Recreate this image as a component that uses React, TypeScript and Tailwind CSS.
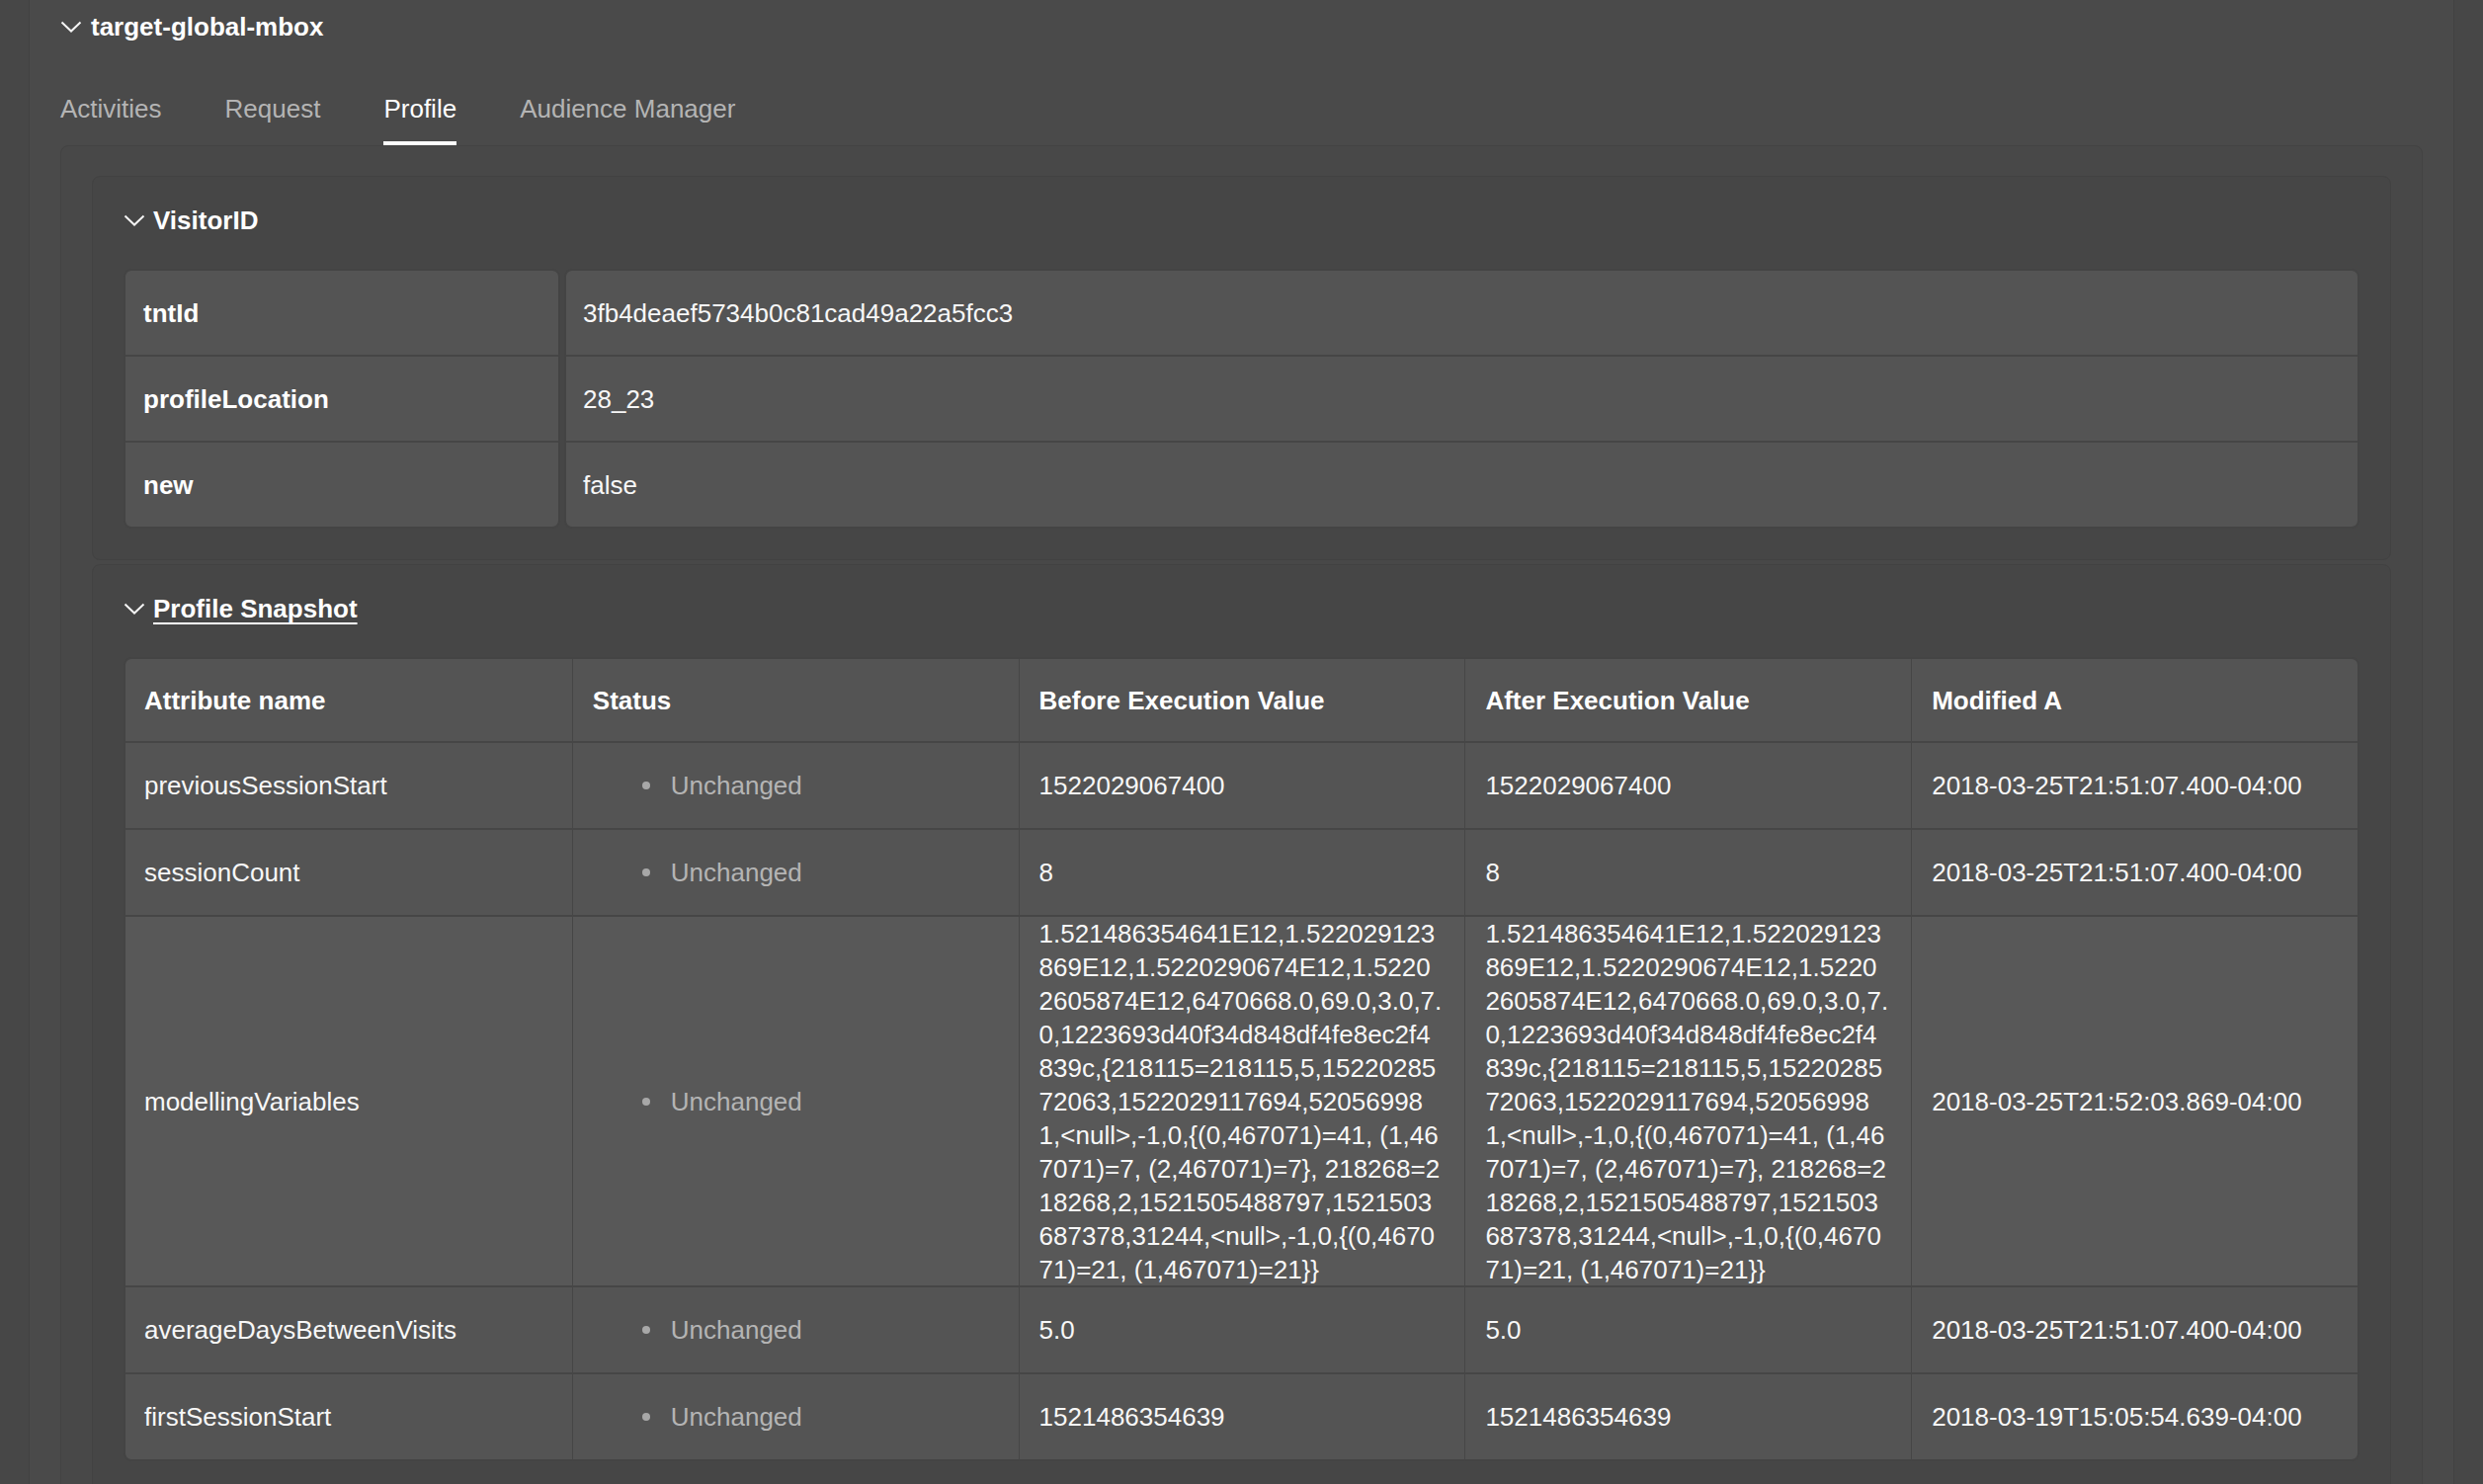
import type { ReactNode } from "react"

const FONT = "font-['Liberation_Sans',Arial,Helvetica,sans-serif]"

const modelling = [
  "1.521486354641E12,1.522029123",
  "869E12,1.5220290674E12,1.5220",
  "2605874E12,6470668.0,69.0,3.0,7.",
  "0,1223693d40f34d848df4fe8ec2f4",
  "839c,{218115=218115,5,15220285",
  "72063,1522029117694,52056998",
  "1,<null>,-1,0,{(0,467071)=41, (1,46",
  "7071)=7, (2,467071)=7}, 218268=2",
  "18268,2,1521505488797,1521503",
  "687378,31244,<null>,-1,0,{(0,4670",
  "71)=21, (1,467071)=21}}",
]

type SnapshotRow = {
  name: string
  before: string | string[]
  after: string | string[]
  modified: string
}

const snapshot: SnapshotRow[] = [
  {
    name: "previousSessionStart",
    before: "1522029067400",
    after: "1522029067400",
    modified: "2018-03-25T21:51:07.400-04:00",
  },
  {
    name: "sessionCount",
    before: "8",
    after: "8",
    modified: "2018-03-25T21:51:07.400-04:00",
  },
  {
    name: "modellingVariables",
    before: modelling,
    after: modelling,
    modified: "2018-03-25T21:52:03.869-04:00",
  },
  {
    name: "averageDaysBetweenVisits",
    before: "5.0",
    after: "5.0",
    modified: "2018-03-25T21:51:07.400-04:00",
  },
  {
    name: "firstSessionStart",
    before: "1521486354639",
    after: "1521486354639",
    modified: "2018-03-19T15:05:54.639-04:00",
  },
]

const visitor = [
  { key: "tntId", value: "3fb4deaef5734b0c81cad49a22a5fcc3" },
  { key: "profileLocation", value: "28_23" },
  { key: "new", value: "false" },
]

function Chevron() {
  return (
    <svg width="22" height="12" viewBox="0 0 22 12" fill="none" className="shrink-0">
      <polyline points="1.5,1.5 11,10.5 20.5,1.5" stroke="#f4f4f4" strokeWidth="2" />
    </svg>
  )
}

function Section({ title, underline, children }: { title: string; underline?: boolean; children: ReactNode }) {
  return (
    <section className="rounded-lg border border-[#424242] bg-[#464646] px-[31px] pt-[28px] pb-[31px]">
      <div className="flex h-8 items-center gap-[8px]">
        <Chevron />
        <span className={"text-[26px] font-bold text-white" + (underline ? " underline decoration-2 underline-offset-[5px]" : "")}>
          {title}
        </span>
      </div>
      <div className="mt-[33px]">{children}</div>
    </section>
  )
}

function Value({ v }: { v: string | string[] }) {
  if (Array.isArray(v)) {
    return (
      <div className="whitespace-nowrap">
        {v.map((line, i) => (
          <div key={i}>{line}</div>
        ))}
      </div>
    )
  }
  return <span>{v}</span>
}

export default function App() {
  return (
    <div className={`min-h-screen bg-[#474747] ${FONT} text-[26px] leading-8 text-[#f7f7f7]`}>
      <div className="mx-[29px] min-h-screen border-x border-[#424242] bg-[#4a4a4a] px-[31px] pt-[11px]">
        {/* mbox header */}
        <div className="flex h-8 items-center gap-[9px]">
          <Chevron />
          <span className="font-bold text-white">target-global-mbox</span>
        </div>

        {/* tabs */}
        <div className="mt-[51px] flex gap-16">
          {["Activities", "Request", "Profile", "Audience Manager"].map((t) => (
            <div
              key={t}
              className={
                t === "Profile"
                  ? "border-b-4 border-white pb-[17px] text-white"
                  : "border-b-4 border-transparent pb-[17px] text-[#b4b4b4]"
              }
            >
              {t}
            </div>
          ))}
        </div>

        {/* tab content */}
        <div className="rounded-lg border border-[#434343] bg-[#484848] px-[31px] pt-[30px] pb-8">
          <div className="flex flex-col gap-[4px]">
            <Section title="VisitorID">
              <div className="flex gap-[4px]">
                <div className="w-[442px] shrink-0 overflow-hidden rounded-lg border-2 border-[#444444] bg-[#545454]">
                  {visitor.map((r, i) => (
                    <div
                      key={r.key}
                      className={
                        "flex items-center px-[18px] font-bold text-white" +
                        (i < visitor.length - 1 ? " h-[87px] border-b-2 border-[#464646]" : " h-[85px]")
                      }
                    >
                      {r.key}
                    </div>
                  ))}
                </div>
                <div className="flex-1 overflow-hidden rounded-lg border-2 border-[#444444] bg-[#545454]">
                  {visitor.map((r, i) => (
                    <div
                      key={r.key}
                      className={
                        "flex items-center px-[17px]" +
                        (i < visitor.length - 1 ? " h-[87px] border-b-2 border-[#464646]" : " h-[85px]")
                      }
                    >
                      {r.value}
                    </div>
                  ))}
                </div>
              </div>
            </Section>

            <Section title="Profile Snapshot" underline>
              <div className="overflow-hidden rounded-lg border-2 border-[#444444] bg-[#545454]">
                <div className="grid h-[85px] grid-cols-5 border-b-2 border-[#464646] font-bold text-white">
                  {["Attribute name", "Status", "Before Execution Value", "After Execution Value", "Modified A"].map(
                    (h, i) => (
                      <div
                        key={h}
                        className={"flex items-center px-[19px]" + (i > 0 ? " border-l border-[#464646] pl-[20px]" : "")}
                      >
                        {h}
                      </div>
                    )
                  )}
                </div>
                {snapshot.map((r, ri) => {
                  const tall = Array.isArray(r.before)
                  const last = ri === snapshot.length - 1
                  return (
                    <div
                      key={r.name}
                      className={
                        "grid grid-cols-5 leading-[34px]" +
                        (tall ? " h-[375px] bg-[#585858]" : last ? " h-[86px]" : " h-[88px]") +
                        (last ? "" : " border-b-2 border-[#464646]")
                      }
                    >
                      <div className="flex items-center px-[19px]">{r.name}</div>
                      <div className="flex items-center gap-[21px] border-l border-[#464646] pl-[70px] text-[#b4b4b4]">
                        <span className="h-[8px] w-[8px] rounded-full bg-[#a8a8a8]" />
                        <span>Unchanged</span>
                      </div>
                      <div className="flex items-center border-l border-[#464646] px-[20px]">
                        <Value v={r.before} />
                      </div>
                      <div className="flex items-center border-l border-[#464646] px-[20px]">
                        <Value v={r.after} />
                      </div>
                      <div className="flex items-center border-l border-[#464646] px-[20px]">{r.modified}</div>
                    </div>
                  )
                })}
              </div>
            </Section>
          </div>
        </div>
      </div>
    </div>
  )
}
